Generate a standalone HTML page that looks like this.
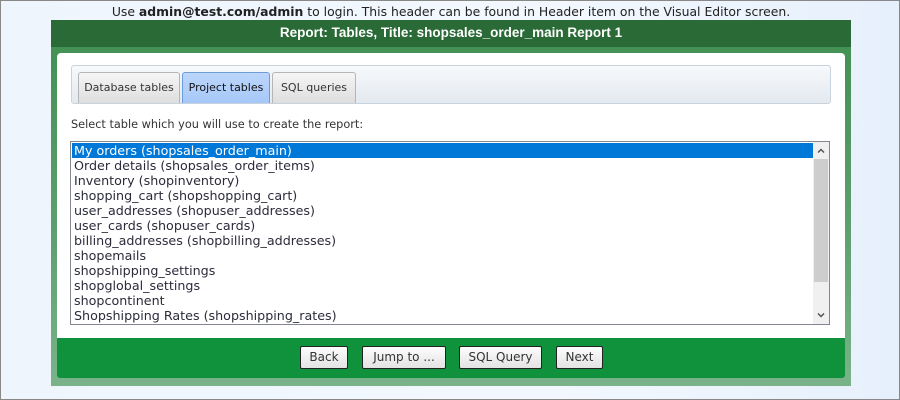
<!DOCTYPE html>
<html><head><meta charset="utf-8"><style>
*{margin:0;padding:0;box-sizing:border-box}
body{width:900px;height:400px;overflow:hidden;font-family:"DejaVu Sans","Liberation Sans",sans-serif;}
.page{position:absolute;left:0;top:0;width:900px;height:400px;border:1px solid #888;background:linear-gradient(90deg,#eef5fd,#f3f8fe 60%,#e6f0fc);}
.top{position:absolute;top:3px;left:0;width:900px;text-align:center;font-size:12.4px;color:#222;}
.frame{position:absolute;left:50px;top:19px;width:800px;height:366px;background:linear-gradient(#3f8f50,#5fa070 60%,#7ab38a);border-radius:3px 3px 0 0;}
.hdr{position:absolute;left:0;top:0;width:800px;height:27px;background:#296a36;color:#fff;font-weight:bold;text-align:center;line-height:26px;font-family:"Liberation Sans",sans-serif;font-size:13.5px}
.panel{position:absolute;left:6px;top:33px;width:788px;height:285px;background:#fff;border-radius:4px 4px 0 0;}
.bot{position:absolute;left:6px;top:318px;width:788px;height:40px;background:#10913c;border-radius:0 0 3px 3px;}
.tabs{position:absolute;left:14px;top:12px;width:760px;height:39px;border:1px solid #c9d3de;border-radius:3px;background:linear-gradient(#f7f9fb,#e3e9f0);}
.tab{position:absolute;top:6px;height:31px;border:1px solid #b5b5b5;border-bottom:none;border-radius:3px 3px 0 0;background:linear-gradient(#f5f5f5,#dedede);font-size:11px;color:#333;text-align:center;line-height:29px;}
.tab.a{background:linear-gradient(#bcd6fb,#a6c8f8);border-color:#6d9dd8;color:#111}
.lbl{position:absolute;left:14px;top:65px;font-size:11.3px;color:#333;}
.lbox{position:absolute;left:13px;top:88px;width:760px;height:184px;border:1px solid #828790;background:#fff;}
.row{height:15px;line-height:15px;font-size:12.7px;color:#2b2b3b;padding-left:3px;white-space:nowrap}
.row.s{background:#0078d7;color:#fff;margin:1px 16px 0 1px;padding-left:2px}
.sb{position:absolute;right:0;top:0;width:16px;height:182px;background:#f0f0f0;}
.th{position:absolute;left:1px;top:17px;width:14px;height:123px;background:#cdcdcd}
.ar{position:absolute;left:4px;}
.btn{position:absolute;top:8px;height:23px;border:1px solid #222;border-radius:2px;background:linear-gradient(#fdfdfd,#e3e3e3);font-size:12px;color:#333;text-align:center;line-height:21px;}
</style></head><body><div class="page">
<div class="top">Use <b>admin@test.com/admin</b> to login. This header can be found in Header item on the Visual Editor screen.</div>
<div class="frame">
<div class="hdr">Report: Tables, Title: shopsales_order_main Report 1</div>
<div class="panel">
<div class="tabs">
<div class="tab" style="left:6px;width:102px">Database tables</div>
<div class="tab a" style="left:110px;width:88px">Project tables</div>
<div class="tab" style="left:200px;width:84px">SQL queries</div>
</div>
<div class="lbl">Select table which you will use to create the report:</div>
<div class="lbox">
<div class="row s">My orders (shopsales_order_main)</div>
<div class="row">Order details (shopsales_order_items)</div>
<div class="row">Inventory (shopinventory)</div>
<div class="row">shopping_cart (shopshopping_cart)</div>
<div class="row">user_addresses (shopuser_addresses)</div>
<div class="row">user_cards (shopuser_cards)</div>
<div class="row">billing_addresses (shopbilling_addresses)</div>
<div class="row">shopemails</div>
<div class="row">shopshipping_settings</div>
<div class="row">shopglobal_settings</div>
<div class="row">shopcontinent</div>
<div class="row">Shopshipping Rates (shopshipping_rates)</div>
<div class="sb">
<svg class="ar" style="top:6px" width="8" height="5" viewBox="0 0 8 5"><path d="M1 4.5L4 1.5L7 4.5" fill="none" stroke="#555" stroke-width="1.5"/></svg>
<div class="th"></div>
<svg class="ar" style="top:171px" width="8" height="5" viewBox="0 0 8 5"><path d="M1 0.5L4 3.5L7 0.5" fill="none" stroke="#555" stroke-width="1.5"/></svg>
</div>
</div>
</div>
<div class="bot">
<div class="btn" style="left:243px;width:48px">Back</div>
<div class="btn" style="left:305px;width:84px">Jump to ...</div>
<div class="btn" style="left:402px;width:83px">SQL Query</div>
<div class="btn" style="left:499px;width:47px">Next</div>
</div>
</div>
</div></body></html>
